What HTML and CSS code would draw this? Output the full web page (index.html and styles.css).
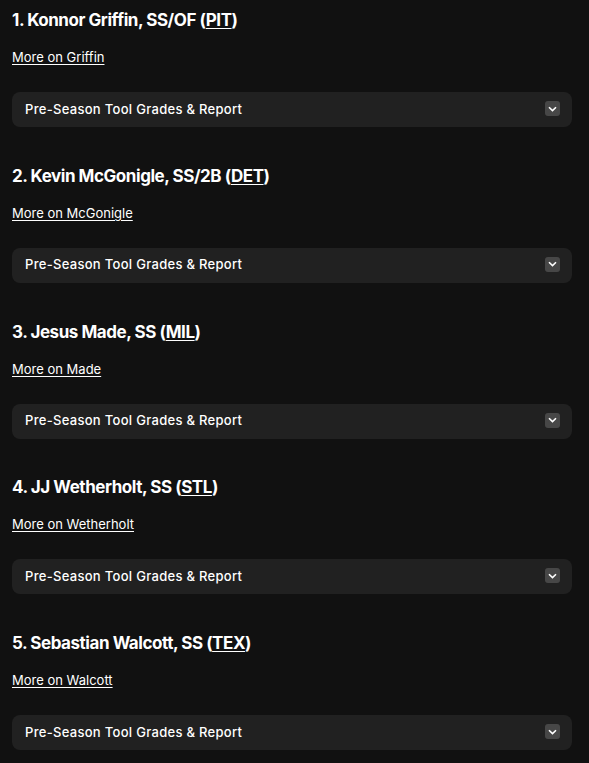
FILE: index.html
```html
<!DOCTYPE html>
<html>
<head>
<meta charset="utf-8">
<link rel="stylesheet" href="styles.css">
</head>
<body>
<main class="list">
  <section class="prospect">
    <h2 class="name">1. Konnor Griffin, SS/OF (<a href="#" class="team">PIT</a>)</h2>
    <a href="#" class="more">More on Griffin</a>
    <div class="acc"><span class="acc-title">Pre-Season Tool Grades &amp; Report</span><span class="chev"><svg width="9" height="6" viewBox="0 0 9 6"><path d="M1 1.2 L4.5 4.6 L8 1.2" fill="none" stroke="#fff" stroke-width="1.6"/></svg></span></div>
  </section>
  <section class="prospect">
    <h2 class="name">2. Kevin McGonigle, SS/2B (<a href="#" class="team">DET</a>)</h2>
    <a href="#" class="more">More on McGonigle</a>
    <div class="acc"><span class="acc-title">Pre-Season Tool Grades &amp; Report</span><span class="chev"><svg width="9" height="6" viewBox="0 0 9 6"><path d="M1 1.2 L4.5 4.6 L8 1.2" fill="none" stroke="#fff" stroke-width="1.6"/></svg></span></div>
  </section>
  <section class="prospect">
    <h2 class="name">3. Jesus Made, SS (<a href="#" class="team">MIL</a>)</h2>
    <a href="#" class="more">More on Made</a>
    <div class="acc"><span class="acc-title">Pre-Season Tool Grades &amp; Report</span><span class="chev"><svg width="9" height="6" viewBox="0 0 9 6"><path d="M1 1.2 L4.5 4.6 L8 1.2" fill="none" stroke="#fff" stroke-width="1.6"/></svg></span></div>
  </section>
  <section class="prospect">
    <h2 class="name">4. JJ Wetherholt, SS (<a href="#" class="team">STL</a>)</h2>
    <a href="#" class="more">More on Wetherholt</a>
    <div class="acc"><span class="acc-title">Pre-Season Tool Grades &amp; Report</span><span class="chev"><svg width="9" height="6" viewBox="0 0 9 6"><path d="M1 1.2 L4.5 4.6 L8 1.2" fill="none" stroke="#fff" stroke-width="1.6"/></svg></span></div>
  </section>
  <section class="prospect">
    <h2 class="name">5. Sebastian Walcott, SS (<a href="#" class="team">TEX</a>)</h2>
    <a href="#" class="more">More on Walcott</a>
    <div class="acc"><span class="acc-title">Pre-Season Tool Grades &amp; Report</span><span class="chev"><svg width="9" height="6" viewBox="0 0 9 6"><path d="M1 1.2 L4.5 4.6 L8 1.2" fill="none" stroke="#fff" stroke-width="1.6"/></svg></span></div>
  </section>
</main>
</body>
</html>
```
FILE: styles.css
```css
html, body {
  margin: 0;
  padding: 0;
  background: #111111;
}
body {
  font-family: "Inter", "Open Sans", sans-serif;
  color: #ffffff;
}
.list {
  display: flex;
  flex-direction: column;
  gap: 36.75px;
  padding: 8px 17px 0 12px;
}
.prospect {
  display: flex;
  flex-direction: column;
  align-items: flex-start;
}
.name {
  margin: 0;
  font-size: 17px;
  line-height: 24px;
  font-weight: 700;
  letter-spacing: -0.45px;
}
.team {
  color: #ffffff;
  text-decoration: underline;
  text-underline-offset: 2px;
}
.more {
  margin-top: 15px;
  font-size: 13px;
  line-height: 20px;
  color: #ffffff;
  text-decoration: underline;
  text-underline-offset: 2px;
}
.acc {
  margin-top: 25px;
  align-self: stretch;
  height: 35px;
  box-sizing: border-box;
  background: #212121;
  border-radius: 8px;
  display: flex;
  align-items: center;
  justify-content: space-between;
  padding: 0 12px 2px 13px;
}
.acc-title {
  font-size: 13px;
  font-weight: 500;
  letter-spacing: 0.3px;
}
.chev {
  width: 15px;
  height: 15px;
  border-radius: 3px;
  background: #474747;
  display: flex;
  align-items: center;
  justify-content: center;
}
```
